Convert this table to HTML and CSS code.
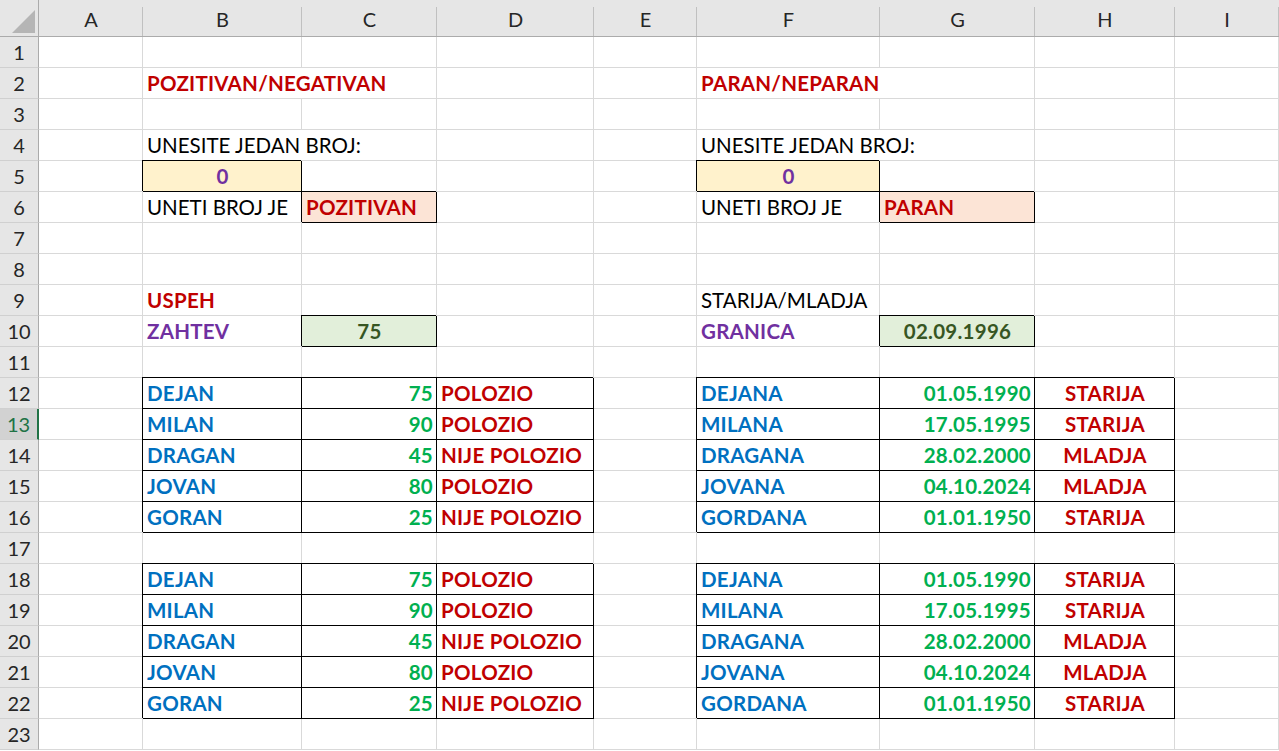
FILE: index.html
```html
<!DOCTYPE html>
<html lang="sr">
<head>
<meta charset="utf-8">
<title>Sheet</title>
<link rel="stylesheet" href="styles.css">
</head>
<body>
<div class="sheet">
  <div class="corner"><svg width="38" height="36" viewBox="0 0 38 36"><polygon points="35,10 35,33 12,33" fill="#b5b5b5"/></svg></div>
  <div class="ch">A</div><div class="ch">B</div><div class="ch">C</div><div class="ch">D</div><div class="ch">E</div><div class="ch">F</div><div class="ch">G</div><div class="ch">H</div><div class="ch last">I</div>

  <div class="rh">1</div><div class="c"></div><div class="c"></div><div class="c"></div><div class="c"></div><div class="c"></div><div class="c"></div><div class="c"></div><div class="c"></div><div class="c"></div>

  <div class="rh">2</div><div class="c"></div><div class="c s2 bold red">POZITIVAN/NEGATIVAN</div><div class="c"></div><div class="c"></div><div class="c s2 bold red">PARAN/NEPARAN</div><div class="c"></div><div class="c"></div>

  <div class="rh">3</div><div class="c"></div><div class="c"></div><div class="c"></div><div class="c"></div><div class="c"></div><div class="c"></div><div class="c"></div><div class="c"></div><div class="c"></div>

  <div class="rh">4</div><div class="c"></div><div class="c s2">UNESITE JEDAN BROJ:</div><div class="c"></div><div class="c"></div><div class="c s2">UNESITE JEDAN BROJ:</div><div class="c"></div><div class="c"></div>

  <div class="rh">5</div><div class="c"></div><div class="c bx yellow mid bold purple">0</div><div class="c"></div><div class="c"></div><div class="c"></div><div class="c bx yellow mid bold purple">0</div><div class="c"></div><div class="c"></div><div class="c"></div>

  <div class="rh">6</div><div class="c"></div><div class="c">UNETI BROJ JE</div><div class="c bx salmon bold red">POZITIVAN</div><div class="c"></div><div class="c"></div><div class="c">UNETI BROJ JE</div><div class="c bx salmon bold red">PARAN</div><div class="c"></div><div class="c"></div>

  <div class="rh">7</div><div class="c"></div><div class="c"></div><div class="c"></div><div class="c"></div><div class="c"></div><div class="c"></div><div class="c"></div><div class="c"></div><div class="c"></div>

  <div class="rh">8</div><div class="c"></div><div class="c"></div><div class="c"></div><div class="c"></div><div class="c"></div><div class="c"></div><div class="c"></div><div class="c"></div><div class="c"></div>

  <div class="rh">9</div><div class="c"></div><div class="c bold red">USPEH</div><div class="c"></div><div class="c"></div><div class="c"></div><div class="c">STARIJA/MLADJA</div><div class="c"></div><div class="c"></div><div class="c"></div>

  <div class="rh">10</div><div class="c"></div><div class="c bold purple">ZAHTEV</div><div class="c bx green-fill mid bold dkgreen">75</div><div class="c"></div><div class="c"></div><div class="c bold purple">GRANICA</div><div class="c bx green-fill mid bold dkgreen">02.09.1996</div><div class="c"></div><div class="c"></div>

  <div class="rh">11</div><div class="c"></div><div class="c"></div><div class="c"></div><div class="c"></div><div class="c"></div><div class="c"></div><div class="c"></div><div class="c"></div><div class="c"></div>

  <div class="rh">12</div><div class="c"></div><div class="c bx bold blue">DEJAN</div><div class="c bx right bold green">75</div><div class="c bx bold red">POLOZIO</div><div class="c"></div><div class="c bx bold blue">DEJANA</div><div class="c bx right bold green">01.05.1990</div><div class="c bx mid bold red">STARIJA</div><div class="c"></div>

  <div class="rh active">13</div><div class="c"></div><div class="c bx bold blue">MILAN</div><div class="c bx right bold green">90</div><div class="c bx bold red">POLOZIO</div><div class="c"></div><div class="c bx bold blue">MILANA</div><div class="c bx right bold green">17.05.1995</div><div class="c bx mid bold red">STARIJA</div><div class="c"></div>

  <div class="rh">14</div><div class="c"></div><div class="c bx bold blue">DRAGAN</div><div class="c bx right bold green">45</div><div class="c bx bold red">NIJE POLOZIO</div><div class="c"></div><div class="c bx bold blue">DRAGANA</div><div class="c bx right bold green">28.02.2000</div><div class="c bx mid bold red">MLADJA</div><div class="c"></div>

  <div class="rh">15</div><div class="c"></div><div class="c bx bold blue">JOVAN</div><div class="c bx right bold green">80</div><div class="c bx bold red">POLOZIO</div><div class="c"></div><div class="c bx bold blue">JOVANA</div><div class="c bx right bold green">04.10.2024</div><div class="c bx mid bold red">MLADJA</div><div class="c"></div>

  <div class="rh">16</div><div class="c"></div><div class="c bx bold blue">GORAN</div><div class="c bx right bold green">25</div><div class="c bx bold red">NIJE POLOZIO</div><div class="c"></div><div class="c bx bold blue">GORDANA</div><div class="c bx right bold green">01.01.1950</div><div class="c bx mid bold red">STARIJA</div><div class="c"></div>

  <div class="rh">17</div><div class="c"></div><div class="c"></div><div class="c"></div><div class="c"></div><div class="c"></div><div class="c"></div><div class="c"></div><div class="c"></div><div class="c"></div>

  <div class="rh">18</div><div class="c"></div><div class="c bx bold blue">DEJAN</div><div class="c bx right bold green">75</div><div class="c bx bold red">POLOZIO</div><div class="c"></div><div class="c bx bold blue">DEJANA</div><div class="c bx right bold green">01.05.1990</div><div class="c bx mid bold red">STARIJA</div><div class="c"></div>

  <div class="rh">19</div><div class="c"></div><div class="c bx bold blue">MILAN</div><div class="c bx right bold green">90</div><div class="c bx bold red">POLOZIO</div><div class="c"></div><div class="c bx bold blue">MILANA</div><div class="c bx right bold green">17.05.1995</div><div class="c bx mid bold red">STARIJA</div><div class="c"></div>

  <div class="rh">20</div><div class="c"></div><div class="c bx bold blue">DRAGAN</div><div class="c bx right bold green">45</div><div class="c bx bold red">NIJE POLOZIO</div><div class="c"></div><div class="c bx bold blue">DRAGANA</div><div class="c bx right bold green">28.02.2000</div><div class="c bx mid bold red">MLADJA</div><div class="c"></div>

  <div class="rh">21</div><div class="c"></div><div class="c bx bold blue">JOVAN</div><div class="c bx right bold green">80</div><div class="c bx bold red">POLOZIO</div><div class="c"></div><div class="c bx bold blue">JOVANA</div><div class="c bx right bold green">04.10.2024</div><div class="c bx mid bold red">MLADJA</div><div class="c"></div>

  <div class="rh">22</div><div class="c"></div><div class="c bx bold blue">GORAN</div><div class="c bx right bold green">25</div><div class="c bx bold red">NIJE POLOZIO</div><div class="c"></div><div class="c bx bold blue">GORDANA</div><div class="c bx right bold green">01.01.1950</div><div class="c bx mid bold red">STARIJA</div><div class="c"></div>

  <div class="rh">23</div><div class="c"></div><div class="c"></div><div class="c"></div><div class="c"></div><div class="c"></div><div class="c"></div><div class="c"></div><div class="c"></div><div class="c"></div>
</div>
</body>
</html>
```

FILE: styles.css
```css
html, body {
  margin: 0;
  padding: 0;
  background: #ffffff;
}

.sheet {
  display: grid;
  grid-template-columns: 39px 104px 159px 135px 157px 103px 183px 155px 140px 1fr;
  grid-template-rows: 37px repeat(23, 31px);
  width: 1279px;
  height: 751px;
  overflow: hidden;
  font-family: Lato, "Liberation Sans", sans-serif;
  font-size: 20.5px;
  color: #000000;
  background: #ffffff;
}

.corner {
  background: #e6e6e6;
  border-right: 1px solid #ababab;
  border-bottom: 1px solid #ababab;
  box-sizing: border-box;
}

.corner svg {
  display: block;
}

.ch {
  background: linear-gradient(#c0c0c0, #c0c0c0) right 0 bottom 0 / 1px 29px no-repeat, #e6e6e6;
  border-bottom: 1px solid #ababab;
  box-sizing: border-box;
  display: flex;
  align-items: center;
  justify-content: center;
  color: #262626;
  font-size: 20px;
  padding-top: 2px;
}

.rh {
  background: #e6e6e6;
  border-right: 1px solid #ababab;
  border-bottom: 1px solid #d0d0d0;
  box-sizing: border-box;
  display: flex;
  align-items: center;
  justify-content: center;
  color: #262626;
  font-size: 20px;
}

.rh.active {
  background: #d2d2d2;
  color: #217346;
  border-right: 2px solid #217346;
}

.c {
  border-right: 1px solid #d9d9d9;
  border-bottom: 1px solid #d9d9d9;
  box-sizing: border-box;
  display: flex;
  align-items: center;
  padding: 0 3px 0 4px;
  white-space: nowrap;
  overflow: visible;
  min-width: 0;
}

.s2 {
  grid-column: span 2;
}

.bx {
  border-right-color: #000000;
  border-bottom-color: #000000;
  box-shadow: -1px -1px 0 0 #000000;
}

.mid { justify-content: center; }
.right { justify-content: flex-end; }

.bold { font-weight: 700; letter-spacing: 0.25px; }
.red { color: #c00000; }
.purple { color: #7030a0; }
.blue { color: #0070c0; }
.green { color: #00b050; }
.dkgreen { color: #375623; }

.yellow { background: #fff2cc; }
.salmon { background: #fce4d6; }
.green-fill { background: #e2efda; }
```
